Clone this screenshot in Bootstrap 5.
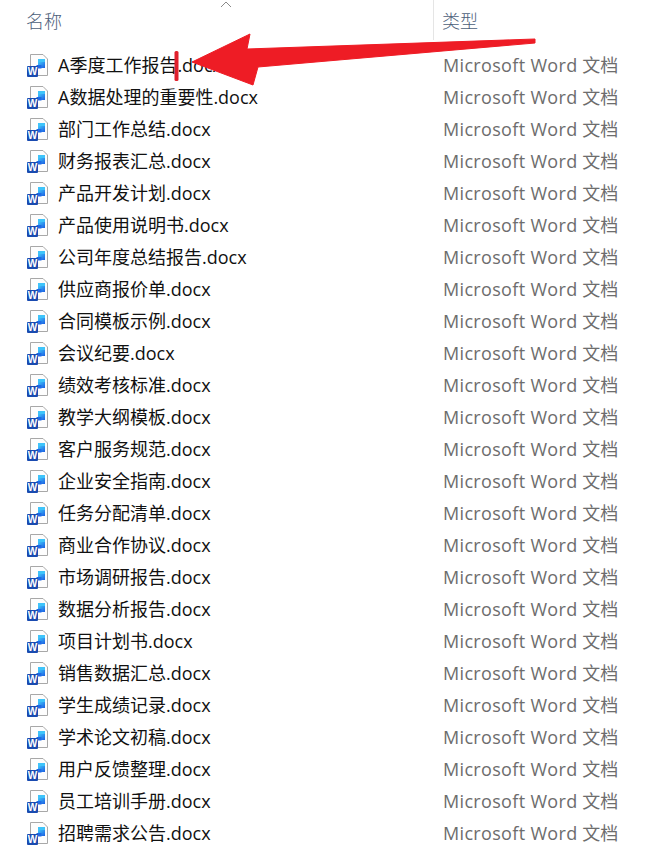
<!DOCTYPE html>
<html lang="zh"><head><meta charset="utf-8">
<link rel="stylesheet" href="https://cdn.jsdelivr.net/npm/bootstrap@5.3.0/dist/css/bootstrap.min.css">
<style>
html,body{margin:0;background:#fff;overflow:hidden}
body{width:666px;height:867px;position:relative;font-family:"Noto Sans CJK SC","Noto Sans",sans-serif}
.hdr{height:49px;color:#4c607a;font-size:18px;font-weight:300}
.hname{width:433px;padding:7px 0 0 26px;position:relative}
.htype{border-left:1px solid #e5e5e5;height:40px;padding:7px 0 0 8px}
.sort-arrow{position:absolute;left:220px;top:1px}
.rows{margin:0;padding:0;list-style:none}
.rowi{height:32px;align-items:center}
.fname{width:385px;padding-left:9px;font-size:18px;color:#111;font-family:"Open Sans","Noto Sans CJK SC",sans-serif;white-space:nowrap;line-height:32px}
.ftype{padding-left:9px;font-size:18px;color:#6d6d6d;font-family:"Open Sans","Noto Sans CJK SC",sans-serif;white-space:nowrap;line-height:32px}
.latin{letter-spacing:.33px}
.ico{margin-left:27px;flex:none;display:block}
.anno{position:absolute;left:0;top:0;pointer-events:none}
</style></head><body>
<div class="hdr d-flex"><div class="hname">名称<svg class="sort-arrow" width="12" height="7" viewBox="0 0 12 7"><path d="M1 6L6 1l5 5" fill="none" stroke="#8a8a8a" stroke-width="1"/></svg></div><div class="htype">类型</div></div>
<ul class="rows" id="l"></ul>
<svg class="anno" width="666" height="867" viewBox="0 0 666 867">
<path d="M535 39L535 43 258 67 253 85 192 62 250 34 247 49Z" fill="#ee1c25" stroke="#ee1c25" stroke-linejoin="round"/>
<rect x="174.500" y="51" width="4" height="30" rx="1.500" fill="#e0202c"/>
</svg>
<svg width="0" height="0" class="position-absolute"><defs>
<linearGradient id="g" x1="0" y1="0" x2="1" y2="1"><stop offset="0" stop-color="#41c8fb"/><stop offset="1" stop-color="#1c5ce0"/></linearGradient>
<symbol id="w" viewBox="0 0 22 24">
<path d="M3.500 1.500H16L20.500 6V22.500H3.500Z" fill="#fdfdfd" stroke="#a8a8a8"/>
<rect x="11" y="6" width="7" height="5" fill="#3fc4fa"/><rect x="11" y="9" width="7" height="6" fill="url(#g)"/><rect x="9.500" y="12" width="5" height="3.500" fill="#1f6ae6"/>
<rect x="0" y="13" width="11" height="11" rx="1" fill="#1a4bb0"/>
<text x="5.500" y="22.200" font-size="10" font-weight="700" fill="#fff" text-anchor="middle" font-family="Liberation Sans">W</text>
</symbol></defs></svg>
<script>
const n=["A季度工作报告","A数据处理的重要性","部门工作总结","财务报表汇总","产品开发计划","产品使用说明书","公司年度总结报告","供应商报价单","合同模板示例","会议纪要","绩效考核标准","教学大纲模板","客户服务规范","企业安全指南","任务分配清单","商业合作协议","市场调研报告","数据分析报告","项目计划书","销售数据汇总","学生成绩记录","学术论文初稿","用户反馈整理","员工培训手册","招聘需求公告"];
document.getElementById('l').innerHTML=n.map(x=>`<li class="rowi d-flex"><svg class="ico" width="22" height="24"><use href="#w"/></svg><span class="fname">${x}.docx</span><span class="ftype"><span class="latin">Microsoft Word</span> 文档</span></li>`).join('');
</script>
</body></html>
